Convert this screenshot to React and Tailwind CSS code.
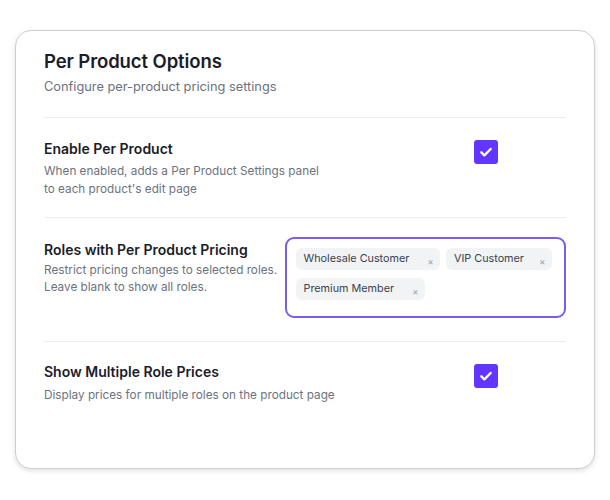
import React from "react";

function Check() {
  return (
    <div className="w-6 h-6 rounded-[3px] bg-[#6236ff] flex items-center justify-center">
      <svg width="16" height="16" viewBox="0 0 24 24" fill="none" stroke="white" strokeWidth="3.5" strokeLinecap="round" strokeLinejoin="round">
        <path d="M5 12.5l4.5 4.5L19 7.5" />
      </svg>
    </div>
  );
}

function Tag({ label, gap }) {
  return (
    <div className="h-[22px] rounded-md bg-[#f2f3f5] flex items-center pl-2 pr-[6px] text-[10.8px] text-[#374151]">
      <span>{label}</span>
      <span className={`${gap} text-[10px] text-[#9ca3af] leading-none mt-[3px]`}>×</span>
    </div>
  );
}

export default function App() {
  return (
    <div className="w-[610px] h-[500px] bg-white pt-[30px] pl-[15px]" style={{ fontFamily: "Inter, 'Noto Sans', sans-serif" }}>
      <div className="w-[580px] h-[439px] border border-[#cfcfcf] rounded-[16px] bg-white shadow-[0_2px_5px_rgba(0,0,0,0.12)] px-[28px] pt-[18px]">
        <h1 className="text-[18.5px] leading-6 font-semibold text-[#1a1d29] tracking-[-0.1px]">Per Product Options</h1>
        <p className="mt-1 text-[12.8px] leading-5 text-[#6b7280]">Configure per-product pricing settings</p>
        <div className="mt-[20px] h-px bg-[#ededed]" />

        <div className="flex pt-[21px] pb-[19px]">
          <div className="w-[280px]">
            <div className="text-[14px] leading-5 font-semibold text-[#1a1d29]">Enable Per Product</div>
            <div className="mt-[3px] text-[11.75px] leading-[18px] text-[#6b7280]">
              When enabled, adds a Per Product Settings panel to each product's edit page
            </div>
          </div>
          <div className="ml-[150px] mt-[1px]">
            <Check />
          </div>
        </div>
        <div className="h-px bg-[#ededed]" />

        <div className="flex pt-[19px] pb-[23px]">
          <div className="w-[241px] pt-[3px]">
            <div className="text-[14px] leading-5 font-semibold text-[#1a1d29]">Roles with Per Product Pricing</div>
            <div className="mt-[2px] text-[11.75px] leading-[17px] text-[#6b7280]">
              Restrict pricing changes to selected roles. Leave blank to show all roles.
            </div>
          </div>
          <div className="w-[282px] h-[81px] border-2 border-[#7b5cf2] rounded-[9px] pl-[9px] pt-[9px] flex flex-wrap content-start gap-x-[6px] gap-y-[8px]">
            <Tag label="Wholesale Customer" gap="ml-[18px]" />
            <Tag label="VIP Customer" gap="ml-[15px]" />
            <Tag label="Premium Member" gap="ml-[18px]" />
          </div>
        </div>
        <div className="h-px bg-[#ededed]" />

        <div className="flex pt-[20px]">
          <div className="w-[300px]">
            <div className="text-[14px] leading-5 font-semibold text-[#1a1d29]">Show Multiple Role Prices</div>
            <div className="mt-[4px] text-[11.75px] leading-[18px] text-[#6b7280] whitespace-nowrap">
              Display prices for multiple roles on the product page
            </div>
          </div>
          <div className="ml-[130px] mt-[2px]">
            <Check />
          </div>
        </div>
      </div>
    </div>
  );
}
